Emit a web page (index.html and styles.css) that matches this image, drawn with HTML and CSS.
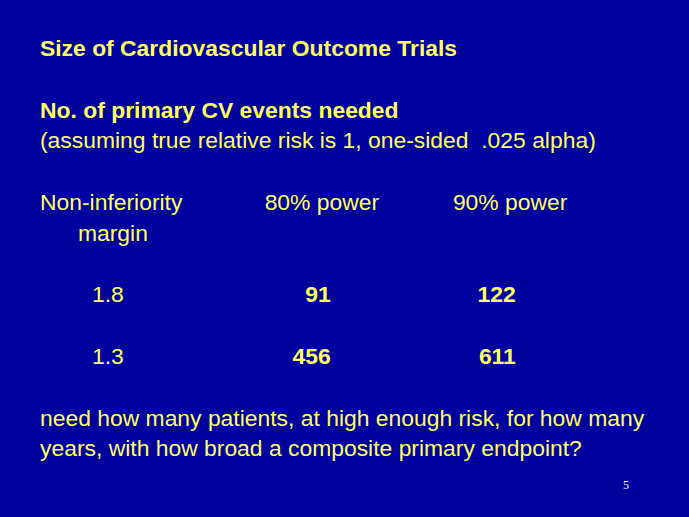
FILE: index.html
```html
<!DOCTYPE html>
<html lang="en">
<head>
<meta charset="utf-8">
<title>Size of Cardiovascular Outcome Trials</title>
<link rel="stylesheet" href="styles.css">
</head>
<body>
<main class="slide">
  <div class="content">
    <p class="line bold gap-after">Size of Cardiovascular Outcome Trials</p>
    <p class="line bold">No. of primary CV events needed</p>
    <p class="line gap-after">(assuming true relative risk is 1, one-sided &nbsp;.025 alpha)</p>
    <div class="table">
      <div class="cell">Non-inferiority</div>
      <div class="cell">80% power</div>
      <div class="cell">90% power</div>
      <div class="cell indent-margin">margin</div>
      <div class="cell"></div>
      <div class="cell"></div>

      <div class="cell indent-num row-gap">1.8</div>
      <div class="cell num num-a row-gap bold">91</div>
      <div class="cell num num-b row-gap bold">122</div>

      <div class="cell indent-num row-gap">1.3</div>
      <div class="cell num num-a row-gap bold">456</div>
      <div class="cell num num-b row-gap bold">611</div>
    </div>
    <p class="line closing">need how many patients, at high enough risk, for how many<br>years, with how broad a composite primary endpoint?</p>
  </div>
  <div class="page-num">5</div>
</main>
</body>
</html>
```
FILE: styles.css
```css
html, body {
  margin: 0;
  padding: 0;
  background: #00009e;
}

.slide {
  width: 689px;
  height: 517px;
  box-sizing: border-box;
  padding: 34px 0 0 40px;
  background: #00009e;
  overflow: hidden;
  color: #ffff60;
  font-family: "Liberation Sans", Arial, sans-serif;
}

.content {
  transform: scaleX(1.04);
  transform-origin: 0 0;
  font-size: 22px;
  line-height: 30.8px;
  white-space: nowrap;
}

.line {
  margin: 0;
}

.bold {
  font-weight: bold;
}

.gap-after {
  margin-bottom: 30.8px;
}

.table {
  display: grid;
  grid-template-columns: 216px 181px auto;
}

.cell {
  min-height: 30.8px;
}

.indent-margin {
  padding-left: 36.5px;
}

.indent-num {
  padding-left: 50px;
}

.row-gap {
  margin-top: 30.8px;
}

.num {
  text-align: right;
}

.num-a {
  width: 63.5px;
}

.num-b {
  width: 60.5px;
}

.closing {
  margin-top: 30.8px;
}

.page-num {
  margin-top: 13px;
  padding-left: 583px;
  font-family: "Liberation Serif", "Times New Roman", serif;
  font-size: 12px;
  line-height: 14px;
  color: #ffffcc;
}
```
